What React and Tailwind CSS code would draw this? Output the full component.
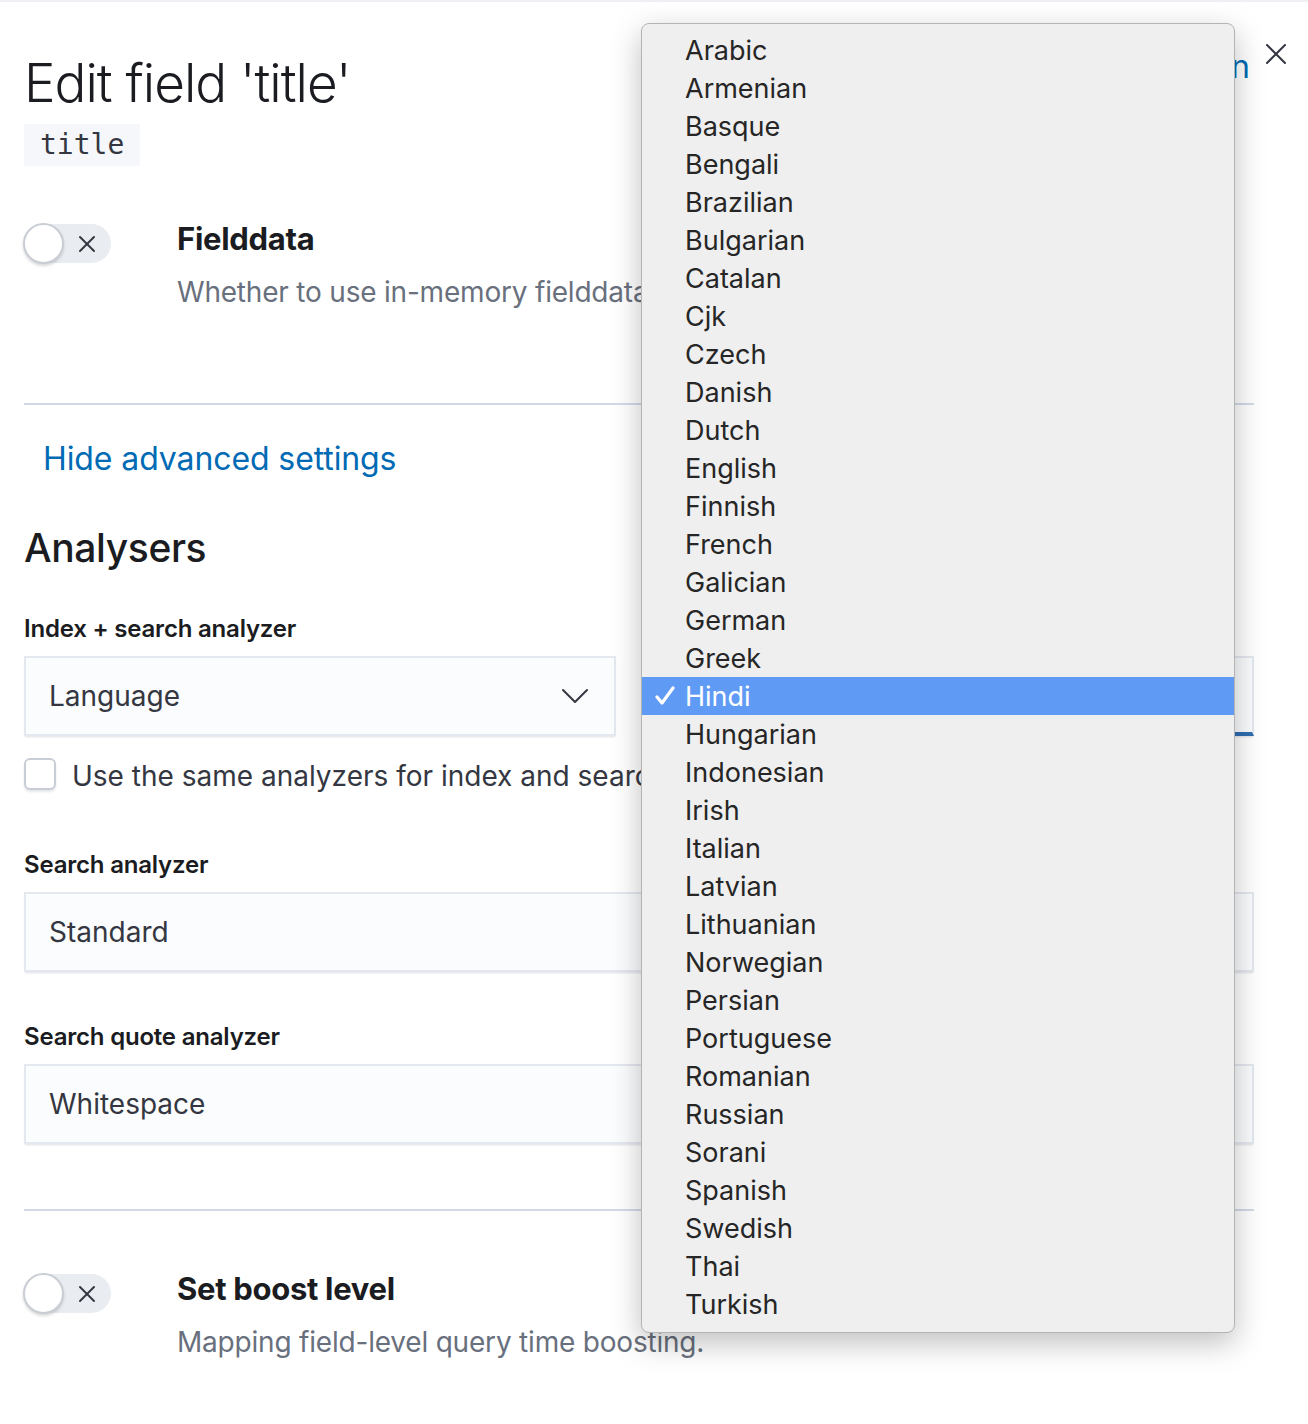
const LANGUAGES = [
  "Arabic", "Armenian", "Basque", "Bengali", "Brazilian", "Bulgarian", "Catalan", "Cjk",
  "Czech", "Danish", "Dutch", "English", "Finnish", "French", "Galician", "German", "Greek",
  "Hindi", "Hungarian", "Indonesian", "Irish", "Italian", "Latvian", "Lithuanian", "Norwegian",
  "Persian", "Portuguese", "Romanian", "Russian", "Sorani", "Spanish", "Swedish", "Thai", "Turkish",
];

function Toggle() {
  return (
    <div className="relative w-[87px] h-[39px] shrink-0 rounded-full bg-[#e9ecf1]">
      <div className="absolute -left-px -top-px w-[41px] h-[41px] rounded-full bg-white border-2 border-[#c9cdd4] shadow-[0_2px_3px_rgba(0,0,0,0.15)]" />
      <svg className="absolute left-[53px] top-[10px]" width="20" height="20" viewBox="0 0 20 20" fill="none" stroke="#343741" strokeWidth="2" strokeLinecap="round">
        <line x1="3" y1="3" x2="17" y2="17" />
        <line x1="17" y1="3" x2="3" y2="17" />
      </svg>
    </div>
  );
}

function Field({ children, className = "" }) {
  return (
    <div className={`h-[80px] flex items-center px-[23px] bg-[#fbfcfd] border-2 border-[#e4e8ef] shadow-[0_2px_2px_-1px_rgba(152,162,179,0.35)] text-[28px] text-[#343741] ${className}`}>
      {children}
    </div>
  );
}

function CheckIcon() {
  return (
    <svg width="20" height="20" viewBox="0 0 20 20" fill="none" stroke="white" strokeWidth="3.2" strokeLinecap="round" strokeLinejoin="round">
      <polyline points="2,11 7,17 18,2" />
    </svg>
  );
}

function LanguageMenu() {
  return (
    <div className="absolute left-[641px] top-[21px] w-[594px] h-[1310px] rounded-[8px] bg-[#efefef] border border-[#b4b4b4] shadow-[0_10px_30px_rgba(0,0,0,0.25)] pt-[7px] font-[Inter,sans-serif] text-[27px] text-[#262626]">
      {LANGUAGES.map((lang) => {
        const selected = lang === "Hindi";
        return (
          <div
            key={lang}
            className={`h-[38px] flex items-center ${selected ? "bg-[#5f9bf5] text-white" : ""}`}
          >
            <span className="w-[43px] flex justify-center pl-[2px]">{selected && <CheckIcon />}</span>
            <span className="leading-none">{lang}</span>
          </div>
        );
      })}
    </div>
  );
}

export default function App() {
  return (
    <div className="relative w-[1308px] h-[1424px] overflow-hidden bg-white border-t-2 border-[#eef0f4] font-[Inter,sans-serif] text-[#343741]">
      <div className="pl-[24px] pr-[54px]">
        <div className="mt-[49px] h-[64px] flex items-center justify-between">
          <h1 className="text-[53px] font-light text-[#1a1c21] tracking-[-1px] leading-none">Edit field 'title'</h1>
          <a className="self-start mt-[-8px] pr-[4px] text-[32px] text-[#006bb4]">Text datatype documentation</a>
        </div>

        <div className="mt-[9px]">
          <code className="inline-flex items-center h-[42px] px-[16px] bg-[#f5f7fa] font-['DejaVu_Sans_Mono',monospace] text-[28px] text-[#343741]">title</code>
        </div>

        <div className="mt-[58px] flex">
          <Toggle />
          <div className="ml-[66px]">
            <div className="h-[30px] flex items-center text-[31px] font-bold text-[#1a1c21] tracking-[-0.3px]">Fielddata</div>
            <div className="mt-[21px] h-[34px] flex items-center text-[28px] text-[#69707d] tracking-[-0.2px]">Whether to use in-memory fielddata for sorting, aggregations or scripting.</div>
          </div>
        </div>

        <div className="mt-[94px] h-[2px] bg-[#d3dae6]" />

        <div className="mt-[34px] h-[40px] flex items-center pl-[19px] text-[32px] text-[#006bb4] tracking-[-0.1px]">Hide advanced settings</div>

        <h2 className="mt-[45px] h-[48px] flex items-center text-[39px] font-medium text-[#1a1c21] tracking-[-0.4px]">Analysers</h2>

        <div className="mt-[43px] h-[28px] flex items-center text-[24px] font-semibold text-[#1a1c21] tracking-[-0.2px]">Index + search analyzer</div>
        <div className="mt-[13px] flex justify-between">
          <Field className="w-[592px] justify-between">
            <span>Language</span>
            <svg width="28" height="16" viewBox="0 0 28 16" fill="none" stroke="#343741" strokeWidth="2" strokeLinecap="round" strokeLinejoin="round" className="mr-[2px]">
              <polyline points="2,2 14,14 26,2" />
            </svg>
          </Field>
          <Field className="w-[604px] border-b-[4px] border-b-[#2f6db0]">
            <span>Hindi</span>
          </Field>
        </div>

        <div className="mt-[22px] h-[32px] flex items-center gap-[16px]">
          <div className="w-[32px] h-[32px] rounded-[6px] bg-white border-2 border-[#c9ced6] shadow-[0_2px_2px_rgba(152,162,179,0.25)]" />
          <span className="text-[28px] text-[#343741] translate-y-[2px]">Use the same analyzers for index and searching</span>
        </div>

        <div className="mt-[61px] h-[28px] flex items-center text-[24px] font-semibold text-[#1a1c21] tracking-[-0.2px]">Search analyzer</div>
        <Field className="mt-[13px]">Standard</Field>

        <div className="mt-[51px] h-[28px] flex items-center text-[24px] font-semibold text-[#1a1c21] tracking-[-0.2px]">Search quote analyzer</div>
        <Field className="mt-[13px]">Whitespace</Field>

        <div className="mt-[65px] h-[2px] bg-[#d3dae6]" />

        <div className="mt-[63px] flex">
          <Toggle />
          <div className="ml-[66px]">
            <div className="h-[30px] flex items-center text-[31px] font-bold text-[#1a1c21] tracking-[-0.3px]">Set boost level</div>
            <div className="mt-[21px] h-[34px] flex items-center text-[28px] text-[#69707d] tracking-[-0.2px]">Mapping field-level query time boosting.</div>
          </div>
        </div>
      </div>

      <button className="absolute right-[20px] top-[40px] w-[24px] h-[24px] flex items-center justify-center" aria-label="Close">
        <svg width="22" height="22" viewBox="0 0 22 22" fill="none" stroke="#343741" strokeWidth="2" strokeLinecap="round">
          <line x1="2" y1="2" x2="20" y2="20" />
          <line x1="20" y1="2" x2="2" y2="20" />
        </svg>
      </button>

      <LanguageMenu />
    </div>
  );
}
